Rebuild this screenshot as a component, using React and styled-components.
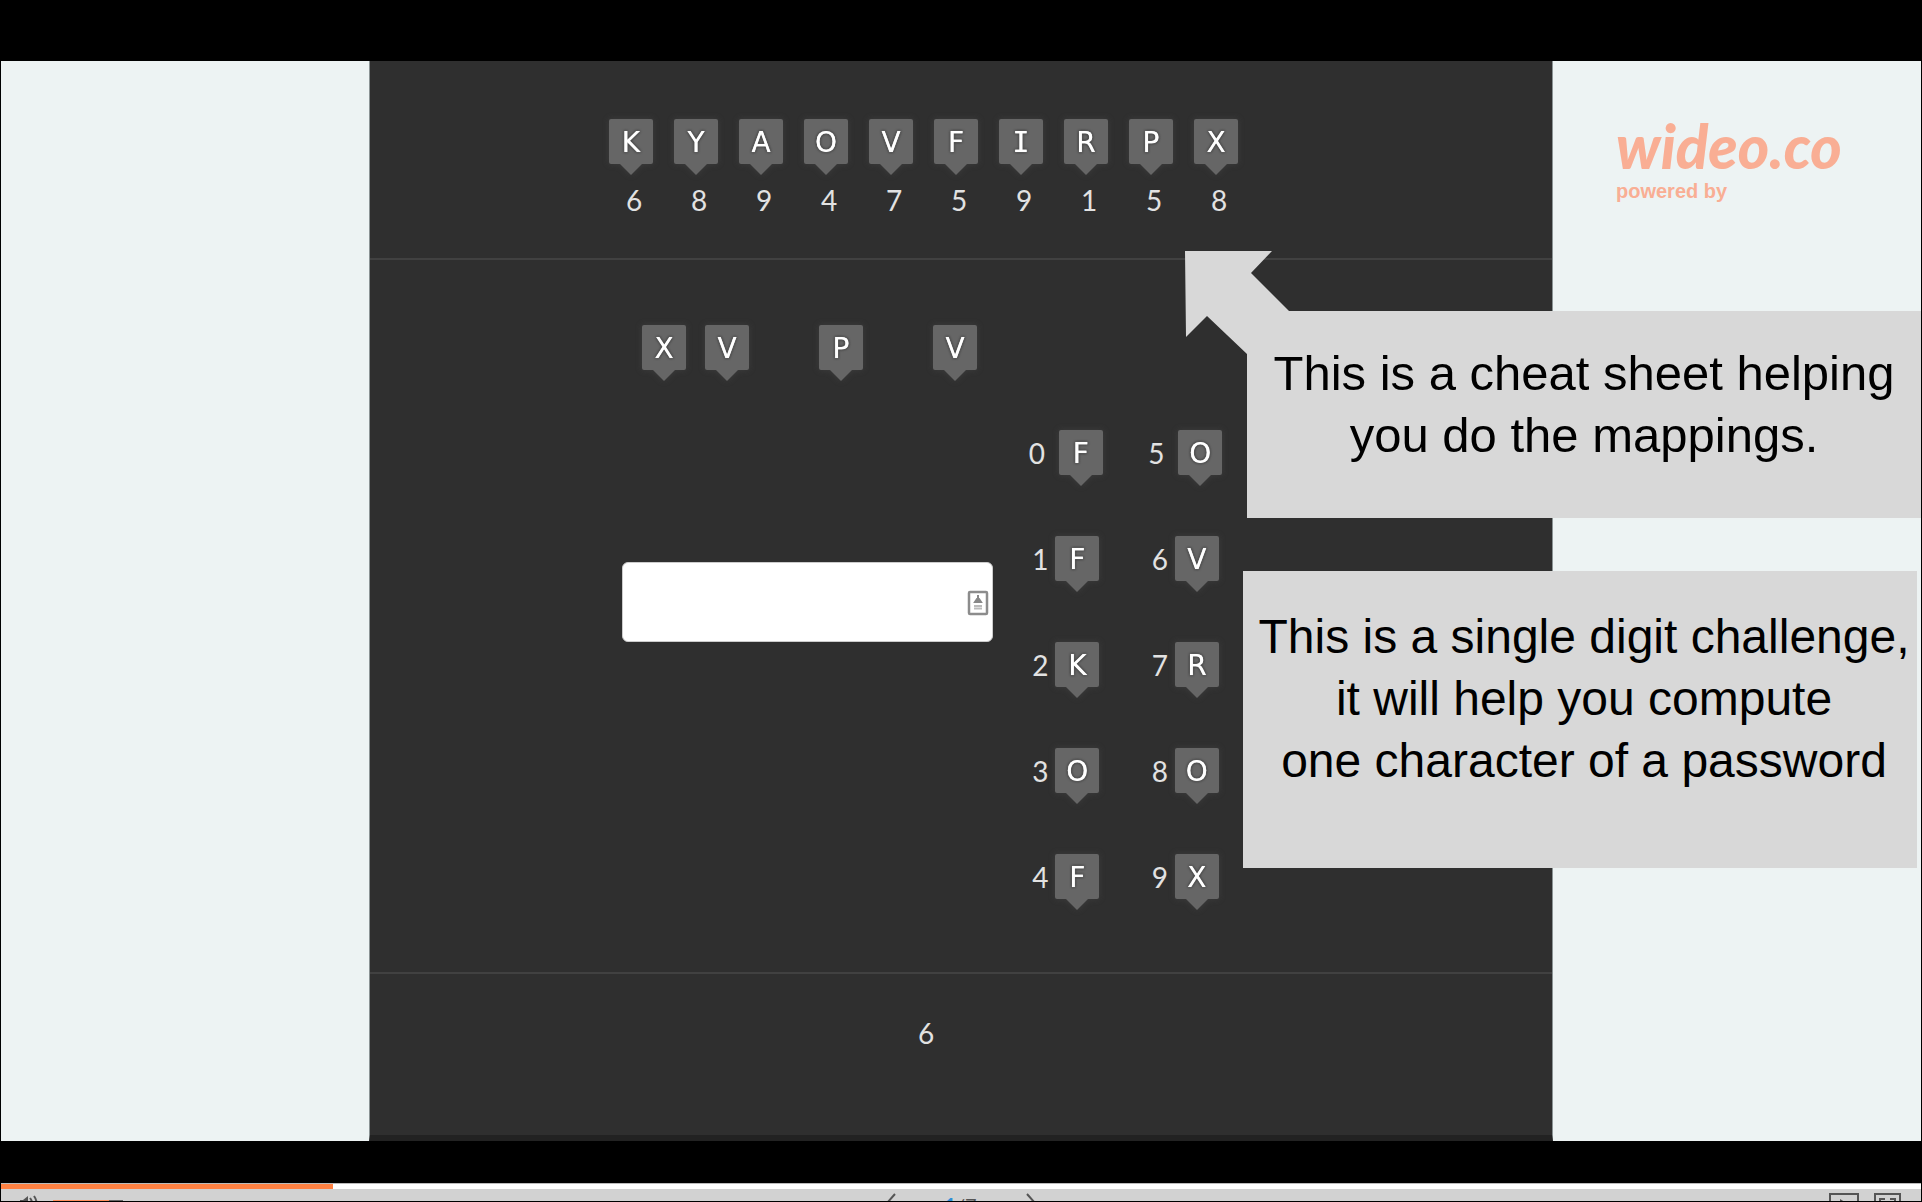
import React from "react";
import styled, { createGlobalStyle } from "styled-components";

const GlobalStyle = createGlobalStyle`
  *, *::before, *::after { box-sizing: border-box; }
  body { margin: 0; background: #000; font-family: Lato, sans-serif; }
`;

const Player = styled.div`
  display: flex;
  flex-direction: column;
  height: 100vh;
  padding-top: 61px;
  border: solid #000;
  border-width: 0 1px 1px;
  background: #000;
  overflow: hidden;
`;

const Stage = styled.main`
  position: relative;
  flex: 1;
  min-height: 0;
  display: grid;
  grid-template-columns: 368fr 1184fr 368fr;
  margin-bottom: 42px;
  background: #edf3f3;
  overflow: hidden;
`;

const Screen = styled.section`
  grid-column: 2;
  display: flex;
  flex-direction: column;
  background: #2f2f2f;
  border: solid #8b9394;
  border-width: 0 1px;
  border-bottom: 6px solid #222;
  color: #e2e2e2;
`;

const Band = styled.div`
  display: flex;
  flex-direction: column;
  align-items: center;
  padding: ${(p) => p.$pad};
  border-bottom: ${(p) => (p.$last ? "0" : "2px solid #414141")};
`;

const CheatRow = styled.ul`
  display: flex;
  gap: 21px;
  margin: 0;
  padding: 0;
  list-style: none;
`;

const CheatItem = styled.li`
  display: flex;
  flex-direction: column;
  align-items: center;
  gap: 2px;
`;

const TileBox = styled.span`
  display: flex;
  flex-direction: column;
  align-items: center;
  filter: drop-shadow(0 0 3px rgba(90, 90, 90, 0.35));

  &::after {
    content: "";
    border: 11px solid transparent;
    border-top-color: #666;
    border-bottom: 0;
  }
`;

const TileFace = styled.span`
  width: 44px;
  height: 45px;
  border-radius: 2px;
  background: #666;
  color: #fff;
  font: 400 28px/48px ${(p) => (p.$serifed ? '"DejaVu Sans Mono", monospace' : '"DejaVu Sans", sans-serif')};
  text-align: center;
  text-shadow: 0 0 1px #fff, 0 0 3px #222, 0 0 2px #333;
`;

const Digit = styled.span`
  font: 400 28px/46px Lato, sans-serif;
  padding-left: ${(p) => (p.$indent ? "6px" : "0")};
`;

const Challenge = styled.div`
  display: grid;
  grid-template-columns: 397px 239px;
  row-gap: 49px;
`;

const Question = styled.div`
  grid-column: 1 / -1;
  display: flex;
  gap: 70px;
  padding-left: 33px;
`;

const Pair = styled.span`
  display: flex;
  gap: 19px;
`;

const Field = styled.label`
  position: relative;
  align-self: start;
  margin: 132px 13px 0;
  height: 80px;
`;

const Answer = styled.input`
  width: 100%;
  height: 100%;
  padding: 0 32px 0 16px;
  border: 1px solid #ccc;
  border-radius: 6px;
  background: #fff;
  font: 400 28px/40px Lato, sans-serif;
  outline: 0;
`;

const FieldIcon = styled.svg`
  position: absolute;
  right: 4px;
  top: 28px;
`;

const Mapping = styled.div`
  display: grid;
  grid-auto-flow: column;
  grid-template: repeat(5, auto) / 1fr 1fr;
  row-gap: 50px;
`;

const MapItem = styled.div`
  display: flex;
  justify-content: center;
  gap: ${(p) => (p.$wide ? "14px" : "7px")};
`;

const Brand = styled.a`
  position: absolute;
  top: 52px;
  right: 79px;
  width: 226px;
  display: flex;
  flex-direction: column;
  color: #f9ae94;
  text-decoration: none;
`;

const Wordmark = styled.span`
  font: italic 900 60px/66px Lato, sans-serif;
`;

const Powered = styled.span`
  font: 700 20px/24px "Liberation Sans", sans-serif;
`;

const Callout = styled.aside`
  position: absolute;
  top: ${(p) => p.$top};
  right: ${(p) => p.$right};
  width: 674px;
  padding: ${(p) => p.$pad};
  background: #d8d8d8;
  color: #000;
  font: 400 ${(p) => p.$size}/62px "Liberation Sans", Arial, sans-serif;
  text-align: center;
  white-space: nowrap;

  p { margin: 0; }
`;

const Pointer = styled.svg`
  position: absolute;
  left: -62px;
  top: -60px;
`;

const Progress = styled.div`
  flex: none;
  height: 6px;
  background: #fff;
  border-top: 1px solid #bbb;
`;

const Played = styled.div`
  height: 5px;
  background: #ff8142;
`;

const Controls = styled.footer`
  flex: none;
  height: 12px;
  overflow: hidden;
  background: #d2d2d2;
`;

const ControlRow = styled.div`
  display: grid;
  grid-template-columns: 1fr auto 1fr;
  align-items: start;
  padding: 4px 20px 0 19px;
`;

const Group = styled.div`
  display: flex;
  align-items: flex-start;
  gap: ${(p) => p.$gap};
  justify-content: ${(p) => p.$justify || "flex-start"};
`;

const IconButton = styled.button`
  display: block;
  padding: 0;
  border: 0;
  background: none;
  color: #555;
  line-height: 0;
`;

const Volume = styled.input`
  appearance: none;
  width: 70px;
  height: 2px;
  margin: 7px 0 0;
  background: #ff8f5c;

  &::-webkit-slider-thumb {
    appearance: none;
    width: 14px;
    height: 2px;
    background: #666;
  }
`;

const Counter = styled.span`
  width: 72px;
  padding-top: 3px;
  font: 400 20px/18px Lato, sans-serif;
  text-align: center;
  color: #555;

  b { color: #2f8fd8; font-weight: 700; }
`;

const cheats = [
  ["K", 6], ["Y", 8], ["A", 9], ["O", 4], ["V", 7],
  ["F", 5], ["I", 9], ["R", 1], ["P", 5], ["X", 8],
];
const mapping = ["F", "F", "K", "O", "F", "O", "V", "R", "O", "X"];

function Tile({ children }) {
  return (
    <TileBox>
      <TileFace $serifed={children === "I"}>{children}</TileFace>
    </TileBox>
  );
}

function Icon({ w, h, children }) {
  return (
    <svg width={w} height={h} viewBox={`0 0 ${w} ${h}`} fill="none" stroke="currentColor" strokeWidth="2" aria-hidden="true">
      {children}
    </svg>
  );
}

export default function App() {
  return (
    <Player>
      <GlobalStyle />
      <Stage>
        <Screen>
          <Band $pad="58px 75px 35px 0">
            <CheatRow>
              {cheats.map(([letter, digit]) => (
                <CheatItem key={letter}>
                  <Tile>{letter}</Tile>
                  <Digit $indent>{digit}</Digit>
                </CheatItem>
              ))}
            </CheatRow>
          </Band>
          <Band $pad="65px 68px 62px 0">
            <Challenge>
              <Question>
                <Pair>
                  <Tile>X</Tile>
                  <Tile>V</Tile>
                </Pair>
                <Tile>P</Tile>
                <Tile>V</Tile>
              </Question>
              <Field>
                <Answer type="text" aria-label="Answer" />
                <FieldIcon width="22" height="26" viewBox="0 0 22 26" aria-hidden="true">
                  <rect x="2" y="2" width="18" height="22" rx="1" fill="#fff" stroke="#8c8c8c" strokeWidth="2.5" />
                  <path d="M11 5v4M8 12h6l-2-3h-2z" fill="#888" stroke="#888" strokeWidth="2" />
                  <path d="M7 16h8M7 18.500h8" stroke="#bbb" strokeWidth="2" />
                </FieldIcon>
              </Field>
              <Mapping>
                {mapping.map((letter, i) => (
                  <MapItem key={i} $wide={i % 5 === 0}>
                    <Digit>{i}</Digit>
                    <Tile>{letter}</Tile>
                  </MapItem>
                ))}
              </Mapping>
            </Challenge>
          </Band>
          <Band $last $pad="36px 70px 0 0">
            <Digit>6</Digit>
          </Band>
        </Screen>

        <Brand href="#wideo">
          <Wordmark>wideo.co</Wordmark>
          <Powered>powered by</Powered>
        </Brand>

        <Callout $size="49px" $top="250px" $right="0" $pad="31px 0 52px">
          <Pointer width="105" height="104" viewBox="0 0 105 104" aria-hidden="true">
            <path d="M0 0H87L66 22L104 60V104H62L62 103L22 65L1 86Z" fill="#d8d8d8" />
          </Pointer>
          <p>This is a cheat sheet helping<br />you do the mappings.</p>
        </Callout>
        <Callout $size="48px" $top="510px" $right="4px" $pad="35px 0 76px 8px">
          <p>This is a single digit challenge,<br />it will help you compute<br />one character of a password</p>
        </Callout>
      </Stage>

      <Progress role="progressbar" aria-label="Playback" aria-valuenow={17} aria-valuemin={0} aria-valuemax={100}>
        <Played style={{ width: `${(332 / 1920) * 100}%` }} />
      </Progress>
      <Controls>
        <ControlRow>
          <Group $gap="14px">
            <IconButton aria-label="Mute">
              <Icon w={19} h={20}>
                <path d="M0 7h3l5-4v14l-5-4H0z" fill="currentColor" stroke="none" />
                <path d="M10 5q4 5 0 10M14 3q5 7 0 14" />
              </Icon>
            </IconButton>
            <Volume type="range" defaultValue="100" aria-label="Volume" />
          </Group>
          <Group $gap="29px">
            <IconButton aria-label="Previous">
              <Icon w={10} h={20}><path d="M9 1L1 10L9 19" /></Icon>
            </IconButton>
            <Counter><b>1</b>/7</Counter>
            <IconButton aria-label="Next">
              <Icon w={10} h={20}><path d="M1 1L9 10L1 19" /></Icon>
            </IconButton>
          </Group>
          <Group $gap="15px" $justify="flex-end">
            <IconButton aria-label="Theater view">
              <Icon w={30} h={22}>
                <path d="M1 1h28v20H1z" />
                <path d="M11 6l8 5-8 5z" fill="currentColor" stroke="none" />
              </Icon>
            </IconButton>
            <IconButton aria-label="Full screen">
              <Icon w={27} h={22}>
                <path d="M1 1h25v20H1zM6 9V6h5M16 6h5v3M6 13v3h5M16 16h5v-3" />
              </Icon>
            </IconButton>
          </Group>
        </ControlRow>
      </Controls>
    </Player>
  );
}
